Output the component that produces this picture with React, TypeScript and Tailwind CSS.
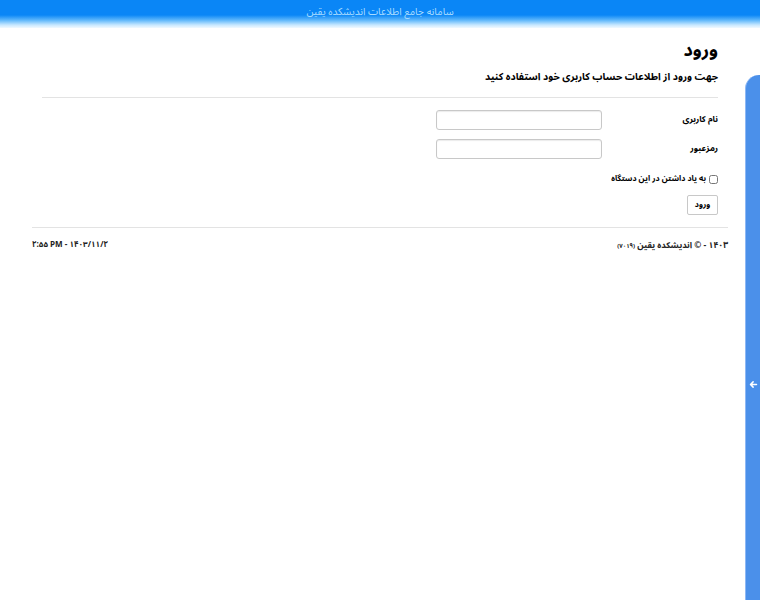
import React from 'react'

const font = { fontFamily: '"Noto Sans Arabic", "Noto Naskh Arabic", "DejaVu Sans Condensed", "DejaVu Sans", sans-serif' }

function Field({ label, type = 'text' }: { label: string; type?: string }) {
  return (
    <div className="flex h-[29px] items-center">
      <label className="w-[116px] shrink-0 text-[8.5px] font-bold text-black">{label}</label>
      <input
        type={type}
        className="h-[20px] w-[166px] rounded-[3px] border border-[#c8c8c8] bg-white shadow-[inset_0_1px_1px_rgba(0,0,0,0.08)] outline-none"
      />
    </div>
  )
}

export default function App() {
  return (
    <div className="relative h-[600px] w-full overflow-hidden bg-white" style={font}>
      <header className="flex h-[28px] items-start justify-center bg-[linear-gradient(to_bottom,#0a86f6_0px,#0a86f6_15px,#5cb6fb_20px,#c8e8ff_25px,#ffffff_29px)] pt-[5px]">
        <span dir="rtl" className="text-[10.2px] text-[#a9dcff]">سامانه جامع اطلاعات اندیشکده یقین</span>
      </header>

      <main dir="rtl" className="px-[32px]">
        <section className="px-[10px]">
          <h1 className="mt-[8px] text-[18px] font-bold leading-[28px] text-black">ورود</h1>
          <p className="mt-[6px] text-[10px] font-bold leading-[14px] text-black">جهت ورود از اطلاعات حساب کاربری خود استفاده کنید</p>
          <hr className="mt-[13px] border-t border-[#e3e3e3]" />

          <div className="mt-[7px] flex flex-col">
            <Field label="نام کاربری" />
            <Field label="رمزعبور" type="password" />
            <label className="mt-[10px] flex items-center gap-[3px] text-[8px] font-bold text-black">
              <input type="checkbox" className="h-[9px] w-[9px]" />
              <span>به یاد داشتن در این دستگاه</span>
            </label>
            <div className="mt-[5px]">
              <button className="h-[20px] w-[31px] rounded-[2px] border border-[#c8c8c8] bg-white text-[8px] font-bold text-black">ورود</button>
            </div>
          </div>
        </section>

        <hr className="mt-[12px] border-t border-[#e3e3e3]" />

        <footer className="mt-[11px] flex items-center justify-between text-[8.5px] font-bold text-[#222]">
          <span>
            ۱۴۰۳ - © اندیشکده یقین <span className="text-[6px]">(۷۰۱۹)</span>
          </span>
          <span dir="ltr" className="text-[8px]">۲:۵۵ PM - ۱۴۰۳/۱۱/۲</span>
        </footer>
      </main>

      <div className="absolute right-0 top-[75px] flex h-[618px] w-[15px] items-center justify-center rounded-tl-[14px] border-l border-[#8db8f5] bg-[#4b90ea]">
        <svg width="9" height="9" viewBox="0 0 24 24" fill="none" stroke="white" strokeWidth="4" strokeLinecap="round" strokeLinejoin="round">
          <path d="M20 12H5M11 5l-7 7 7 7" />
        </svg>
      </div>
    </div>
  )
}
